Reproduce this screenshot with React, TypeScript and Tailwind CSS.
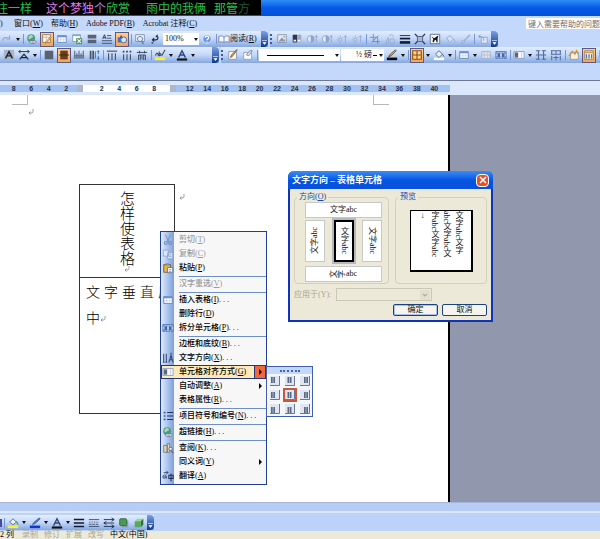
import { useState } from 'react'
import type { ReactNode } from 'react'

const grid = (
  <>
    <path d="M2 3h10v8H2z" fill="#fff" stroke="#5f7fb8" />
    <path d="M2 4h10" stroke="#6a93dc" strokeWidth="2" />
    <path d="M2 8h10M5.5 5v6M9 5v6" stroke="#b5c6e6" strokeWidth=".7" />
  </>
)

const globe = (
  <>
    <circle cx="6" cy="6" r="4.6" fill="#4d9a86" />
    <path d="M3 4.5C4.5 2 7 2 8 3.5S6 6 4.5 7 2.5 6 3 4.500Z" fill="#a8dcae" />
    <ellipse cx="8" cy="10.500" rx="4" ry="1.800" fill="#e8eefb" stroke="#66748f" />
    <path d="M6.500 10.500h3" stroke="#66748f" />
  </>
)

const icons: Record<string, ReactNode> = {
  redo: <path d="M2 9c0-4 5-5 8-2M10 3v4H6" fill="none" stroke="#94aad2" strokeWidth="1.3" />,
  globe,
  drawTable: (
    <>
      <path d="M2 2h9v9H2z" fill="#fff" stroke="#8b7256" />
      <path d="M2 5h9M6 2v9" stroke="#c9b597" />
      <path d="M12 5 7 11l-2 1 1-2 5-6z" fill="#f6cd58" stroke="#99683a" strokeWidth=".7" />
    </>
  ),
  grid,
  excel: (
    <>
      <path d="M2 2h9v8H2z" fill="#fff" stroke="#7d94bd" />
      <path d="M2 3h9" stroke="#86a9e0" strokeWidth="1.500" />
      <path d="M6 6h7v7H6z" fill="#4f9c55" />
      <path d="m7.500 7.500 4 4m0-4-4 4" stroke="#fff" strokeWidth="1.300" />
    </>
  ),
  columns: <path d="M2 2h10v4.500H2zM2 8h10v4H2z" fill="#566379" />,
  textLines: (
    <>
      <path d="m2 7 2-5 2 5M3 5.500h2" fill="none" stroke="#222c44" />
      <path d="M7 3h5M7 6h5M1 9h12M1 12h12" stroke="#38445f" />
    </>
  ),
  drawing: (
    <>
      <path d="M2 5h6v6H2z" fill="#476fc6" />
      <circle cx="9" cy="8" r="3.500" fill="#d8e2f5" stroke="#4465a8" />
      <path d="m4 6 2-4 2 4z" fill="#42598d" />
    </>
  ),
  docMap: (
    <>
      <path d="M2 2h10v8H2z" fill="#f6f9ff" stroke="#7788ac" />
      <circle cx="7" cy="7" r="3" fill="#dcefff" stroke="#66789b" />
      <path d="m9 9 2 4" stroke="#66789b" strokeWidth="1.500" />
    </>
  ),
  marks: <path d="M10 2 8 5M9 4c2 0 2 4-1 4H4m2-2L4 8l2 2M3 11l2 1" fill="none" stroke="#202b48" strokeWidth="1.400" />,
  help: (
    <>
      <circle cx="7" cy="7" r="5" fill="#6e98dd" stroke="#e4eeff" />
      <path d="M5 5.500c0-2.500 4-2.500 4 0C9 7 7 7 7 8.500M7 10v1" fill="none" stroke="#fff" strokeWidth="1.400" />
    </>
  ),
  book: (
    <>
      <path d="M1 4c2-1 4-1 6 1 2-2 4-2 6-1v7c-2-1-4-1-6 0-2-1-4-1-6 0z" fill="#f4f8ff" stroke="#6b7da4" />
      <path d="M7 5v6" stroke="#6b7da4" />
    </>
  ),
  picture: (
    <>
      <path d="M2 2h10v9H2z" fill="#e5ecf7" stroke="#8390aa" />
      <path d="m3 10 4-5 2 3 1-1 1 3z" fill="#8796b1" />
      <circle cx="9.500" cy="4.500" r="1" fill="#b98b85" />
    </>
  ),
  colorMode: (
    <>
      <path d="M2 2h5v9H2z" fill="#2c3850" />
      <path d="M7 2h5v9H7z" fill="#9faabd" />
      <path d="M3 8h3v2H3zM8 8h3v2H8z" fill="#f2f6fd" />
    </>
  ),
  contrast: (
    <>
      <circle cx="5.500" cy="7" r="4" fill="#e2ebf9" stroke="#8ea4ca" />
      <path d="M5.500 3a4 4 0 0 1 0 8z" fill="#8ea4ca" />
      <path d="M12 11V3m-1.500 2L12 3l1.500 2" fill="none" stroke="#8ea4ca" />
    </>
  ),
  bright: (
    <>
      <circle cx="5" cy="8" r="2" fill="none" stroke="#93a8cd" />
      <path d="M5 3v2M1 8h1M2 5l1 1M8 5 7 6M5 11v1M11 11V3M9.500 5 11 3l1.500 2" fill="none" stroke="#93a8cd" />
    </>
  ),
  crop: <path d="M5 1v9h8M1 5h9v8M3 11l8-8" fill="none" stroke="#7089b8" />,
  rotate: <path d="M2 12 5 5v7zM7 12V7h5v5zM6 3c3-2 5 0 5 2" fill="none" stroke="#97abd0" />,
  lines: (
    <>
      <path d="M1 3h12" stroke="#111b30" />
      <path d="M1 6.500h12" stroke="#111b30" strokeWidth="2" />
      <path d="M1 11h12" stroke="#111b30" strokeWidth="3" />
    </>
  ),
  compress: (
    <>
      <path d="M4 4h6v6H4z" fill="#a9b7d2" stroke="#485879" />
      <path d="m1 1 3 3m9-3-3 3m-9 9 3-3m9 3-3-3" stroke="#2d3958" strokeWidth="1.500" />
    </>
  ),
  wrap: (
    <>
      <path d="M1.500 1.500h11v11h-11z" fill="#f6f6f6" stroke="#596989" />
      <path d="m4 10 1-3-2-3 3 2 3-2 2-1-1 4v4H9L8 8 6 9v2z" fill="#101827" />
    </>
  ),
  bucketOff: <path d="m3 6 4-3 4 4-4 4zm8 1 2 3-2 1" fill="#d3dff3" stroke="#91a5cb" />,
  penOff: <path d="m12 2-5 6-3 1-1 3 3-1 1-3 6-5z" fill="#cddcf3" stroke="#91a5cb" />,
  reset: (
    <>
      <path d="M5 5h7v7H5z" fill="#dbe5f6" stroke="#91a5cb" />
      <path d="M8 9c0-4-2-5-6-5m2-2L2 4l2 2" fill="none" stroke="#7f96bf" />
    </>
  ),
  charShade: (
    <>
      <path d="M1 1h12v12H1z" fill="#a9b5c8" />
      <path d="m3 11 4-8 4 8M5 8h4" fill="none" stroke="#1f2637" strokeWidth="1.700" />
    </>
  ),
  charScale: (
    <>
      <path d="m2 12 5-6 5 6M4 10h6" fill="none" stroke="#1d2434" strokeWidth="1.400" />
      <path d="M1 3h12M3 1 1 3l2 2m8-4 2 2-2 2" fill="none" stroke="#1d2434" />
    </>
  ),
  alignBlock: <path d="M2 2h10v10H2z" fill="#596274" />,
  alignCenter: (
    <>
      <path d="M3 2h8v10H3z" fill="#8a4f28" />
      <path d="M1 7h12M3.500 2v10M5.800 2v10M8.200 2v10M10.500 2v10" stroke="#3b2618" />
    </>
  ),
  alignTop: <path d="M2 11V2m2.500 9V5m2.500 6V2m2.500 9V5M12 11V2M1 10.500h12M1 8h12" fill="none" stroke="#5c6a85" strokeWidth="1.300" />,
  lineSpace: (
    <>
      <path d="M2 2h2v10H2zM5 2h2v10H5z" fill="#4a566e" />
      <path d="M8 3h1v8H8z" fill="#4a566e" />
      <path d="M12 6V2m-1 1.500L12 2l1 1.500M12 8v4m-1-1.500 1 1.500 1-1.500" stroke="#2a6fb8" fill="none" />
    </>
  ),
  numbering: (
    <>
      <path d="M3 5v8M7 5v8M11 5v8" stroke="#47536d" strokeWidth="1.300" />
      <path d="M1 2.500h12" stroke="#35425e" strokeWidth="1.200" />
    </>
  ),
  bullets: (
    <>
      <path d="M3 6v7M7 6v7M11 6v7" stroke="#47536d" strokeWidth="1.300" />
      <path d="M2 2h2v2H2zM6 2h2v2H6zM10 2h2v2h-2z" fill="#35425e" />
    </>
  ),
  indent: <path d="M1 4h12M4 2v3m6-3v3M3 7v6m2-6v6m2-5v4m2-5v6m2-6v6M3 7h8" fill="none" stroke="#2e3a55" />,
  highlight: (
    <>
      <path d="M1 10h12v3H1z" fill="#fff02a" />
      <path d="M2 8c0-4 3-4 3 0M6 3v5c3 0 3-3 0-3M13 1 9 8" fill="none" stroke="#3e454d" strokeWidth="1.200" />
    </>
  ),
  fontColor: (
    <>
      <path d="M1 11h12v2.500H1z" fill="#111" />
      <path d="m3 10 4-8 4 8M5 7h4" fill="none" stroke="#2c477e" strokeWidth="1.600" />
    </>
  ),
  pencil: (
    <>
      <path d="M2 3h9v9H2z" fill="#fff" stroke="#8490a8" />
      <path d="m12 1-6 8-2 1 1-3 6-6z" fill="#e0ad4d" stroke="#5d4326" strokeWidth=".8" />
    </>
  ),
  eraser: (
    <>
      <path d="M2 4h9v8H2z" fill="#fff" stroke="#8c9bb9" />
      <path d="m12 2-4 6-3-1 4-5z" fill="#d8e0ee" stroke="#66748e" strokeWidth=".8" />
    </>
  ),
  penColor: (
    <>
      <path d="M1 10h12v3H1z" fill="#0a0a0a" />
      <path d="m12 2-6 6-3 1 2-3 6-5z" fill="#e1b24d" stroke="#393322" strokeWidth=".8" />
    </>
  ),
  borders: <path d="M2 2h10v10H2zM7 2v10M2 7h10" fill="#ffd488" stroke="#8b4d1c" strokeWidth="1.300" />,
  shade: (
    <>
      <path d="M1 10h12v3H1z" fill="#fdfefe" />
      <path d="m3 6 4-4 4 4-4 4zM11 6l2 3" fill="#e9eef5" stroke="#4b5d7c" />
    </>
  ),
  merge: (
    <>
      <path d="M2 3h10v8H2z" fill="#e0e5f0" stroke="#a0aec9" />
      <path d="M2 7h10M5 3v8M9 3v8" stroke="#b5bfd2" />
    </>
  ),
  split: (
    <>
      <path d="M1 3h12v8H1z" fill="#8aa9dd" stroke="#5277b8" />
      <path d="M4 4v7m3-7v7m3-7v7M1 7h12" stroke="#e7f0ff" />
      <path d="M3 5h3v5H3zM8 5h3v5H8z" fill="#4367a8" />
    </>
  ),
  cellAlign: (
    <>
      <path d="M1 3h12v8H1z" fill="#f8faff" stroke="#8799bd" />
      <path d="M2 4h4v6H2z" fill="#58667e" />
      <path d="M10 4v6" stroke="#bec8dc" />
    </>
  ),
  rows: <path d="M1 2h5M1 7h12M1 12h5M8 2h5M8 12h5M4 2v10m6-10v10" fill="none" stroke="#5069a0" strokeWidth="1.300" />,
  cols: <path d="M1 2h12M1 6h12M2 2v4m5-4v4m5-4v4M2 8v5m5-5v5m5-5v5M4 10h6" fill="none" stroke="#5069a0" strokeWidth="1.200" />,
  autoFormat: (
    <>
      <path d="M3 4h9v8H3z" fill="#fbf3df" stroke="#8e96a8" />
      <path d="m1 8 4-5 3 3 2-4 2 4" fill="none" stroke="#dc8f2e" strokeWidth="1.500" />
    </>
  ),
  textDir: (
    <>
      <path d="M2 2h10v10H2z" fill="#fff4d8" stroke="#8f8070" />
      <path d="M2 4h10" stroke="#d19951" strokeWidth="2" />
      <path d="M4 6v5m3-5v5m3-5v5" stroke="#5870a2" strokeWidth="1.500" />
    </>
  ),
  fill: (
    <>
      <path d="M1 10h12v3H1z" fill="#fff02a" />
      <path d="m3 6 4-4 4 4-4 3z" fill="#e8f0f8" stroke="#48658c" />
      <path d="m11 5 2 4" stroke="#40a34e" strokeWidth="1.500" />
    </>
  ),
  lineColor: (
    <>
      <path d="M1 10h12v3H1z" fill="#1038d8" />
      <path d="m13 2-5 5-4 2 2-3 6-5z" fill="#4b83d8" stroke="#324e82" strokeWidth=".8" />
    </>
  ),
  dashes: (
    <>
      <path d="M1 3h12M1 11h12" stroke="#3b4a68" />
      <path d="M1 6h12" stroke="#3b4a68" strokeDasharray="1 1" />
      <path d="M1 8.500h12" stroke="#3b4a68" strokeDasharray="3 1" />
    </>
  ),
  weights: <path d="M1 3h12M1 7h12M1 11h12" stroke="#111b30" strokeWidth="1.700" />,
  arrows: <path d="M1 3h12M1 7h12M1 11h12M10 1l3 2-3 2M4 5 1 7l3 2m6 0 3 2-3 2" fill="none" stroke="#1b2744" />,
  shadow: (
    <>
      <path d="M4 4h8v8H4z" fill="#8b99b1" />
      <rect x="2" y="2" width="8" height="8" rx="1" fill="#4c9a52" stroke="#2f6b3a" />
    </>
  ),
  cube: (
    <>
      <path d="M2 5 5 2h7l-3 3z" fill="#9bd39c" />
      <path d="m9 5 3-3v7l-3 3z" fill="#2d7039" />
      <path d="M2 5h7v7H2z" fill="#58a85d" />
    </>
  ),
  cut: (
    <>
      <path d="m4 1 4 8m2-8L6 9" stroke="#6c87bb" fill="none" />
      <path d="M3 9h3v3H3zM8 9h3v3H8z" stroke="#6c87bb" fill="none" />
    </>
  ),
  copy: <path d="M1.500 2.500h6v7h-6zM6.500 5.500h6v7h-6zM8 8h3m-3 2h3" fill="#dbe6f8" stroke="#8ca4d0" />,
  paste: (
    <>
      <path d="M2 3h8v9H2z" fill="#e7b44c" stroke="#775a2c" />
      <path d="M4 1.500h4v3H4z" fill="#8793a8" />
      <path d="M6.500 6.500h6v6h-6z" fill="#fff" stroke="#5770a5" />
      <path d="M8 9h3m-3 2h3" stroke="#5770a5" strokeWidth=".7" />
    </>
  ),
  direction: <path d="M2 2v10M5 2v10M1 12h2m1 0h2M8 12l2.500-8 2.500 8M9 9h3M10.500 1v3" fill="none" stroke="#2d4575" strokeWidth="1.200" />,
  list: (
    <>
      <path d="M6 3h7M6 7h7M6 11h7" stroke="#21365f" strokeWidth="1.200" />
      <path d="M2 2h2v2H2zM2 6h2v2H2zM2 10h2v2H2z" fill="#2e5bb0" />
    </>
  ),
  lookup: (
    <>
      <path d="M2 4h4v8H2zM6 2h3v10H6z" fill="#e4d7b2" stroke="#5a6379" strokeWidth=".8" />
      <circle cx="10" cy="8" r="2" fill="#eaf3ff" stroke="#5a6379" />
      <path d="m11 10 2 3" stroke="#5a6379" strokeWidth="1.300" />
    </>
  ),
  translate: (
    <>
      <path d="M1 8c0-3 4-3 4 0v2M5 8c-3 0-4 0-4 1s3 1 4-1M2 3h5M5 1l2 2-2 2" fill="none" stroke="#2c4270" />
      <path d="M8 6h5v4H8zM10.500 4v9" fill="none" stroke="#1f3055" strokeWidth="1.200" />
    </>
  ),
}

const Icon = ({ name }: { name: string }) => (
  <svg viewBox="0 0 14 14" className="h-3 w-3 shrink-0" aria-hidden="true">
    {icons[name]}
  </svg>
)

const toolbarBg = 'bg-linear-to-b from-[#e3edfd] via-[#c2d7f8] to-[#86a7df]'

const Tool = ({ name, active = false }: { name: string; active?: boolean }) => (
  <button
    aria-label={name}
    className={[
      'flex h-[15px] w-[14px] shrink-0 items-center justify-center',
      active ? 'border border-[#5d5a80] bg-linear-to-b from-[#ffcf8c] to-[#f9a34c]' : '',
    ].join(' ')}
  >
    <Icon name={name} />
  </button>
)

const Arrow = () => (
  <span className="flex w-[6px] shrink-0 justify-center">
    <svg viewBox="0 0 4 3" className="h-[3px] w-1" aria-hidden="true">
      <path d="M0 0h4L2 3z" fill="#111" />
    </svg>
  </span>
)

const Sep = () => <span className="ml-px h-2.5 w-px shrink-0 bg-[#7596d2]" />

const Grip = () => <span className="h-2.5 w-1 shrink-0 border-l-2 border-dotted border-[#3d5c9c]" />

const Cap = ({ className = '' }: { className?: string }) => (
  <span
    className={[
      'flex h-full w-[7px] shrink-0 items-end justify-center rounded-r-sm bg-linear-to-b from-[#7ba0e4] to-[#0b3a8c] pb-[2px]',
      className,
    ].join(' ')}
  >
    <svg viewBox="0 0 5 5" className="h-[5px] w-[5px]" aria-hidden="true">
      <path d="M0 .5h5M1 2.500h3L2.500 4.500z" fill="#fff" stroke="#fff" strokeWidth=".6" />
    </svg>
  </span>
)

// "|" is a separator, ">" a drop-down arrow, "*" marks a pressed button
const Tools = ({ items }: { items: string }) => (
  <>
    {items.split(' ').map((item, i) => {
      if (item === '|') return <Sep key={i} />
      if (item === '>') return <Arrow key={i} />
      return <Tool key={i} name={item.replace('*', '')} active={item.startsWith('*')} />
    })}
  </>
)

const Hotkey = ({ k }: { k: string }) => (
  <>
    (<span className="underline">{k}</span>)
  </>
)

const menus = [
  { label: '窗口', k: 'W' },
  { label: '帮助', k: 'H' },
  { label: 'Adobe PDF', k: 'B' },
  { label: 'Acrobat 注释', k: 'C' },
]

const TitleBar = () => (
  <header className="flex h-4 shrink-0 bg-linear-to-b from-[#2f8df5] via-[#0458e8] to-[#0551d6]">
    <div className="flex h-[15px] w-[261px] items-center overflow-hidden bg-black font-['Noto_Sans_CJK_SC',sans-serif] text-xs leading-[15px] whitespace-nowrap text-[#22c04c]">
      <span className="-ml-1 shrink-0">往一样</span>
      <span className="ml-3.5 shrink-0">
        <span className="text-[#e07be6]">这个梦独</span>
        <span className="text-[#9f86d8]">个</span>欣赏
      </span>
      <span className="ml-4 shrink-0">雨中的我俩</span>
      <span className="ml-2 shrink-0">
        那管<span className="text-[#14602a]">方</span>
      </span>
    </div>
  </header>
)

const MenuBar = () => (
  <nav className="flex h-[15px] shrink-0 items-center bg-[#c3d8fa]">
    <span className="w-3.5">)</span>
    <div className="flex gap-2">
      {menus.map((m) => (
        <button key={m.k} className="whitespace-nowrap">
          {m.label}
          <Hotkey k={m.k} />
        </button>
      ))}
    </div>
    <input
      aria-label="帮助"
      defaultValue="键入需要帮助的问题"
      className="ml-auto h-[11px] w-[74px] bg-white pl-0.5 text-[#6d6d6d] outline-none"
    />
  </nav>
)

const Toolbars = () => (
  <div className="flex shrink-0 flex-col bg-[#c3d8fa]">
    <div className="flex h-4 gap-0.5">
      <div className={`flex w-[268px] shrink-0 items-center gap-px ${toolbarBg}`}>
        <Tools items="redo > | globe *drawTable grid excel columns textLines *drawing | docMap marks" />
        <button className="flex h-3 w-9 shrink-0 items-center justify-between bg-white pl-0.5">
          100%
          <Arrow />
        </button>
        <Tools items="help |" />
        <button className="flex shrink-0 items-center whitespace-nowrap">
          <Icon name="book" />
          阅读
          <Hotkey k="R" />
        </button>
        <Cap className="ml-auto" />
      </div>
      <div className={`flex items-center gap-px ${toolbarBg}`}>
        <Grip />
        <Tools items="picture colorMode contrast contrast bright bright | crop rotate lines compress wrap bucketOff penOff | reset" />
        <Cap />
      </div>
    </div>
    <div className="flex h-4 gap-0.5">
      <div className={`flex w-[219px] shrink-0 items-center gap-px pl-0.5 ${toolbarBg}`}>
        <Tools items="charShade charScale > | alignBlock *alignCenter alignTop lineSpace | numbering bullets indent | highlight > fontColor >" />
        <Cap className="ml-auto" />
      </div>
      <div className={`flex flex-1 items-center gap-px overflow-hidden ${toolbarBg}`}>
        <Grip />
        <Tools items="pencil eraser |" />
        <button aria-label="线型" className="flex h-3 w-[81px] shrink-0 items-center bg-white pl-2">
          <span className="h-px flex-1 bg-black" />
          <span className="flex w-4 justify-end">
            <Arrow />
          </span>
        </button>
        <button className="flex h-3 w-[43px] shrink-0 items-center justify-end gap-px bg-white whitespace-nowrap">
          ½ 磅
          <span className="h-px w-1 bg-black" />
          <Arrow />
        </button>
        <Tools items="penColor > | *borders > shade > | grid > merge split | cellAlign > rows cols | autoFormat *textDir excel" />
      </div>
    </div>
    <div className="h-[17px]" />
  </div>
)

const Ticks = ({ values }: { values: number[] }) => (
  <>
    {values.map((v) => (
      <span key={v} className="flex-1 text-center">
        {v}
      </span>
    ))}
  </>
)

const Ruler = () => (
  <div className="flex h-[15px] shrink-0 items-center border-t border-[#6c7896] bg-[#dbe7fb] font-['Liberation_Sans',sans-serif] text-[7px] leading-[7px] font-bold text-[#26304a]">
    <div className="flex h-[7px] w-3/4 bg-[#a3c1f3]">
      <div className="flex w-[77px] pr-0.5 pl-[5px]">
        <Ticks values={[8, 6, 4, 2]} />
      </div>
      <span className="w-1.5 bg-[#aeb7c8]" />
      <div className="flex w-[87px] bg-white pr-[7px] pl-2.5">
        <Ticks values={[2, 4, 6, 8]} />
      </div>
      <span className="w-1.5 bg-[#aeb7c8]" />
      <div className="flex flex-1 pr-[7px] pl-[5px]">
        <Ticks values={[12, 14, 16, 18, 20, 22, 24, 26, 28, 30, 32, 34, 36, 38, 40]} />
      </div>
    </div>
  </div>
)

const Mark = () => (
  <svg viewBox="0 0 6 6" className="inline-block h-1.5 w-1.5" aria-hidden="true">
    <path d="M5 0v2.500Q5 4 3 4H1m1.500-1.500L1 4l1.500 1.500" fill="none" stroke="#777" strokeWidth=".7" />
  </svg>
)

const Page = () => (
  <article className="h-full w-3/4 border-r-2 border-black bg-white">
    <div className="flex h-2.5 justify-between pr-[59px] pl-3">
      <span className="w-4 border-r border-b border-[#b8b8b8]" />
      <span className="w-4 border-b border-l border-[#b8b8b8]" />
    </div>
    <div className="flex h-[79px] pt-1 pl-7">
      <Mark />
    </div>
    <div className="flex gap-1 pl-[79px]">
      <table className="w-24 border-collapse font-['Noto_Sans_CJK_SC',sans-serif] text-sm font-light text-black">
        <tbody>
          <tr>
            <td className="h-[93px] border border-[#333] p-0">
              <div className="flex flex-col items-center">
                <p className="text-[15px] leading-[18px] whitespace-nowrap [writing-mode:vertical-rl]">怎样使表格</p>
                <Mark />
              </div>
            </td>
          </tr>
          <tr>
            <td className="h-[136px] border border-[#333] p-0 pr-0.5 pl-1.5 align-top leading-[26px]">
              <p className="[text-align-last:justify] whitespace-nowrap">文字垂直居</p>
              <p>
                中
                <Mark />
              </p>
            </td>
          </tr>
        </tbody>
      </table>
      <span className="pt-2">
        <Mark />
      </span>
    </div>
  </article>
)

type Entry = { label: string; k: string; icon?: string; off?: boolean; dots?: boolean; sub?: boolean; active?: boolean }

const groups: Entry[][] = [
  [
    { label: '剪切', k: 'T', icon: 'cut', off: true },
    { label: '复制', k: 'C', icon: 'copy', off: true },
    { label: '粘贴', k: 'P', icon: 'paste' },
  ],
  [{ label: '汉字重选', k: 'V', off: true }],
  [
    { label: '插入表格', k: 'I', icon: 'grid', dots: true },
    { label: '删除行', k: 'D' },
    { label: '拆分单元格', k: 'P', icon: 'split', dots: true },
  ],
  [
    { label: '边框和底纹', k: 'B', dots: true },
    { label: '文字方向', k: 'X', icon: 'direction', dots: true },
    { label: '单元格对齐方式', k: 'G', icon: 'cellAlign', sub: true, active: true },
    { label: '自动调整', k: 'A', sub: true },
    { label: '表格属性', k: 'R', dots: true },
  ],
  [{ label: '项目符号和编号', k: 'N', icon: 'list', dots: true }],
  [{ label: '超链接', k: 'H', icon: 'globe', dots: true }],
  [
    { label: '查阅', k: 'K', icon: 'lookup', dots: true },
    { label: '同义词', k: 'Y', sub: true },
    { label: '翻译', k: 'A', icon: 'translate' },
  ],
]

const MenuRow = ({ item }: { item: Entry }) => (
  <button
    role="menuitem"
    disabled={item.off}
    className={[
      'flex h-[14px] w-full items-center whitespace-nowrap',
      item.off ? 'text-[#9a9a9a]' : 'text-black',
      item.active ? 'bg-[#ffe9b8] outline outline-[#25377c] -outline-offset-1' : '',
    ].join(' ')}
  >
    <span className="flex w-[13px] justify-center">{item.icon && <Icon name={item.icon} />}</span>
    <span className="pl-[5px]">
      {item.label}
      <Hotkey k={item.k} />
      {item.dots && '. . .'}
    </span>
    {item.sub && (
      <span
        className={[
          'ml-auto flex h-full w-3 items-center justify-center',
          item.active ? 'border border-[#25377c] bg-[#f0683a]' : '',
        ].join(' ')}
      >
        <svg viewBox="0 0 3 6" className="h-1.5 w-[3px]" aria-hidden="true">
          <path d="M0 0v6l3-3z" fill="#000" />
        </svg>
      </span>
    )}
  </button>
)

const ContextMenu = () => (
  <div
    role="menu"
    className="absolute top-[136px] left-40 w-[107px] border border-[#1f3f94] bg-[#f7f7f7] bg-linear-to-r from-[#dfeafc] to-[#7d9fdc] bg-[length:13px_100%] bg-no-repeat py-px font-medium"
  >
    {groups.map((group, i) => (
      <div key={i} className={i > 0 ? 'mt-px' : ''}>
        {i > 0 && <hr className="ml-[18px] border-t border-[#6d8fca]" />}
        {group.map((item) => (
          <MenuRow key={item.label} item={item} />
        ))}
      </div>
    ))}
  </div>
)

const AlignGlyph = ({ col, row }: { col: number; row: number }) => (
  <svg viewBox="0 0 10 10" className="h-2.5 w-2.5 shrink-0" aria-hidden="true">
    <path d="M0 0h10v10H0z" fill="#dfe6f2" />
    <path d="M0 9.500h9.500V0" fill="none" stroke="#66789c" />
    <rect x={1 + col * 1.5} y={1 + row} width="4" height="6" fill="#5a6a84" />
    <path d={`M${3 + col * 1.5} ${1 + row}v6`} stroke="#cdd6e6" strokeWidth=".7" />
  </svg>
)

const AlignPalette = () => {
  const [selected, setSelected] = useState(4)

  return (
    <div className="absolute top-[271px] left-[266px] w-[47px] border border-[#3d5fae] bg-[#f4f6fa]">
      <div className="flex h-[7px] items-center justify-center bg-[#c3d8fa]">
        <span className="w-5 border-t-2 border-dotted border-[#4566b0]" />
      </div>
      <div className="grid grid-cols-3 justify-items-center">
        {Array.from({ length: 9 }, (_, i) => (
          <button
            key={i}
            aria-label={`对齐 ${i + 1}`}
            onClick={() => setSelected(i)}
            className={[
              'flex h-[14px] w-[14px] items-center justify-center',
              selected === i ? 'border-2 border-[#c9573a] bg-[#f5a07c]' : '',
            ].join(' ')}
          >
            <AlignGlyph col={i % 3} row={Math.floor(i / 3)} />
          </button>
        ))}
      </div>
    </div>
  )
}

const optionBox = 'flex items-center justify-center border border-[#c5c9cc] bg-white whitespace-nowrap'

const DirectionDialog = () => (
  <section
    role="dialog"
    aria-labelledby="dialog-title"
    className="absolute top-[76px] left-72 w-[205px] rounded-t-md border-2 border-t-0 border-[#0d35b5] bg-[#ece9d8]"
  >
    <div className="-mx-0.5 flex h-[18px] items-center justify-between rounded-t-md bg-linear-to-b from-[#3b8bf5] via-[#0556e4] to-[#0a4fd8] pr-1 pl-1">
      <h2 id="dialog-title" className="text-[9px] font-bold text-white">
        文字方向 – 表格单元格
      </h2>
      <button aria-label="关闭" className="flex h-[13px] w-[13px] items-center justify-center rounded-sm border border-white bg-[#dc5433]">
        <svg viewBox="0 0 8 8" className="h-2 w-2" aria-hidden="true">
          <path d="m1 1 6 6m0-6L1 7" stroke="#fff" strokeWidth="1.500" />
        </svg>
      </button>
    </div>
    <div className="flex gap-1.5 px-1 pt-[3px]">
      <fieldset className="h-[92px] w-24 rounded-sm border border-[#d3d0bf] pl-2.5">
        <legend className="-ml-2 px-0.5 leading-[10px] text-[#1b46a8]">
          方向
          <Hotkey k="O" />
        </legend>
        <div className="flex w-[77px] flex-col gap-1">
          <button className={`h-4 ${optionBox}`}>文字abc</button>
          <div className="-mt-0.5 flex h-[42px] justify-between">
            <button className={`w-5 ${optionBox}`}>
              <span className="rotate-180 [text-orientation:sideways] [writing-mode:vertical-rl]">文字abc</span>
            </button>
            <button className="flex w-5 items-center justify-center border-2 border-black bg-white whitespace-nowrap outline-2 outline-[#b7b7c0]">
              <span className="[writing-mode:vertical-rl]">文字abc</span>
            </button>
            <button className={`w-5 ${optionBox}`}>
              <span className="[text-orientation:sideways] [writing-mode:vertical-rl]">文字abc</span>
            </button>
          </div>
          <button className={`h-4 ${optionBox}`}>
            <span className="-rotate-90">文</span>
            <span className="-rotate-90">字</span>abc
          </button>
        </div>
      </fieldset>
      <fieldset className="h-[92px] w-[93px] rounded-sm border border-[#d3d0bf] pl-3.5">
        <legend className="-ml-3 px-0.5 leading-[10px] text-[#1b46a8]">预览</legend>
        <div className="mt-2 h-[62px] w-[63px] border border-r-2 border-b-2 border-black bg-white">
          <div className="h-full py-[5px] pr-1 leading-3 [writing-mode:vertical-rl]">
            <p>文字abc文字</p>
            <p>abc文字abc文</p>
            <p>字abc文字abc</p>
            <p className="font-bold [text-orientation:upright]">↓</p>
          </div>
        </div>
      </fieldset>
    </div>
    <div className="flex items-center gap-1 pt-1 pl-1 text-[#a9a694]">
      <label htmlFor="apply-to" className="w-[38px] whitespace-nowrap">
        应用于(Y):
      </label>
      <div className="relative">
        <select id="apply-to" disabled className="block h-[13px] w-24 appearance-none border border-[#cbc8b8] bg-[#ece9d8]" />
        <svg viewBox="0 0 10 10" className="absolute top-0.5 right-0.5 h-2.5 w-2.5" aria-hidden="true">
          <path d="M0 0h10v10H0z" fill="#e2dfce" />
          <path d="m3 4 2 2 2-2" fill="none" stroke="#b3b09e" strokeWidth="1.200" />
        </svg>
      </div>
    </div>
    <div className="flex justify-end gap-1 pt-[3px] pr-1 pb-1 leading-[10px]">
      <button className="h-3 w-[45px] rounded-xs border border-[#1c4380] bg-[#f5f4ee] shadow-[inset_0_0_0_1px_#a9c1ec]">确定</button>
      <button className="h-3 w-[45px] rounded-xs border border-[#1c4380] bg-[#f5f4ee]">取消</button>
    </div>
  </section>
)

const StatusBar = () => (
  <footer className="flex h-2 shrink-0 items-center gap-1.5 bg-[#ece9d8] leading-[8px] text-[#aaa793] whitespace-nowrap">
    <span className="mr-0.5 text-black">2 列</span>
    <span>录制</span>
    <span>修订</span>
    <span>扩展</span>
    <span>改写</span>
    <span className="text-black">中文(中国)</span>
  </footer>
)

export default function App() {
  return (
    <div className="flex h-screen flex-col overflow-hidden bg-[#c3d8fa] font-['Liberation_Serif','Noto_Sans_CJK_SC',serif] text-[8px] leading-[10px] text-[#111]">
      <TitleBar />
      <MenuBar />
      <Toolbars />
      <Ruler />
      <main className="relative min-h-0 flex-1 bg-[#9198ae]">
        <Page />
        <ContextMenu />
        <AlignPalette />
        <DirectionDialog />
      </main>
      <div className="h-[9px] shrink-0 border-t border-[#a3b5dc] bg-[#b8cdf6]" />
      <div className="flex h-5 shrink-0 items-end border-t-2 border-[#dce8fb] bg-[#bcd2f8] pb-px">
        <div className={`flex h-[15px] items-center gap-px ${toolbarBg}`}>
          <span className="h-2 w-0.5 bg-[#4a4a9c]" />
          <Tools items="| fill > lineColor > fontColor > weights dashes arrows shadow cube" />
          <Cap />
        </div>
      </div>
      <StatusBar />
    </div>
  )
}
